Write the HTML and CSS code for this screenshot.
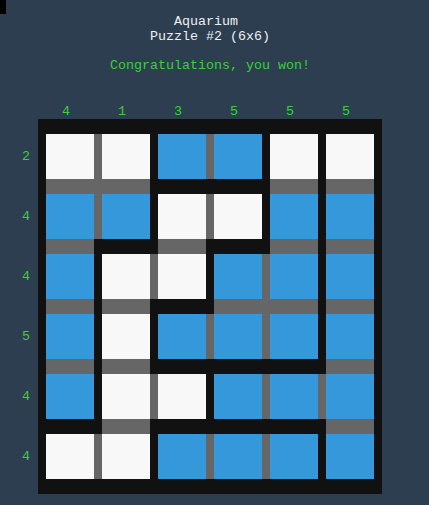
FILE: index.html
```html
<!DOCTYPE html>
<html lang="en">
<head>
<meta charset="utf-8">
<title>Aquarium</title>
<link rel="stylesheet" href="styles.css">
</head>
<body>
<div class="cursor"></div>
<main class="game">
  <header class="head">
    <h1 class="title"><span class="name">Aquarium</span><span class="sub">Puzzle #2 (6x6)</span></h1>
    <p class="status">Congratulations, you won!</p>
  </header>
  <div class="col-labels"><span>4</span><span>1</span><span>3</span><span>5</span><span>5</span><span>5</span></div>
  <div class="row-labels"><span>2</span><span>4</span><span>4</span><span>5</span><span>4</span><span>4</span></div>
  <div class="board">
    <div class="w"></div><div class="g"></div><div class="w"></div><div></div><div class="b"></div><div class="g"></div><div class="b"></div><div></div><div class="w"></div><div></div><div class="w"></div>
    <div class="g"></div><div class="g"></div><div class="g"></div><div></div><div></div><div></div><div></div><div></div><div class="g"></div><div></div><div class="g"></div>
    <div class="b"></div><div class="g"></div><div class="b"></div><div></div><div class="w"></div><div class="g"></div><div class="w"></div><div></div><div class="b"></div><div></div><div class="b"></div>
    <div class="g"></div><div></div><div></div><div></div><div class="g"></div><div></div><div></div><div></div><div class="g"></div><div></div><div class="g"></div>
    <div class="b"></div><div></div><div class="w"></div><div class="g"></div><div class="w"></div><div></div><div class="b"></div><div class="g"></div><div class="b"></div><div></div><div class="b"></div>
    <div class="g"></div><div></div><div class="g"></div><div></div><div></div><div></div><div class="g"></div><div class="g"></div><div class="g"></div><div></div><div class="g"></div>
    <div class="b"></div><div></div><div class="w"></div><div></div><div class="b"></div><div class="g"></div><div class="b"></div><div class="g"></div><div class="b"></div><div></div><div class="b"></div>
    <div class="g"></div><div></div><div class="g"></div><div></div><div></div><div></div><div></div><div></div><div></div><div></div><div class="g"></div>
    <div class="b"></div><div></div><div class="w"></div><div class="g"></div><div class="w"></div><div></div><div class="b"></div><div class="g"></div><div class="b"></div><div class="g"></div><div class="b"></div>
    <div></div><div></div><div class="g"></div><div></div><div></div><div></div><div></div><div></div><div></div><div></div><div class="g"></div>
    <div class="w"></div><div class="g"></div><div class="w"></div><div></div><div class="b"></div><div class="g"></div><div class="b"></div><div class="g"></div><div class="b"></div><div></div><div class="b"></div>
  </div>
</main>
</body>
</html>
```
FILE: styles.css
```css
html, body {
  margin: 0;
  padding: 0;
  background: #2c3e50;
}
body {
  font-family: "Courier New", Courier, "Nimbus Mono PS", "FreeMono", "Liberation Mono", monospace;
  font-size: 13.333px;
  line-height: 15px;
  color: #ecf0f1;
}
.cursor {
  width: 6px;
  height: 14px;
  background: #000;
}
.game {
  display: grid;
  grid-template-columns: 24px 344px;
  margin-left: 14px;
}
.head {
  grid-column: 2;
  text-align: center;
}
.title {
  margin: 0;
  font-size: inherit;
  font-weight: normal;
  line-height: 15px;
}
.title span {
  display: block;
}
.name {
  padding-right: 8px;
}
.status {
  margin: 14px 0 31px;
  color: #3ccf3c;
}
.col-labels {
  grid-column: 2;
  display: flex;
  color: #3ccf3c;
}
.col-labels span {
  width: 56px;
  text-align: center;
}
.row-labels {
  grid-column: 1;
  display: grid;
  grid-template-rows: repeat(6, 45px);
  row-gap: 15px;
  padding-top: 15px;
  align-items: center;
  justify-items: center;
  color: #3ccf3c;
}
.board {
  grid-column: 2;
  display: grid;
  grid-template-columns: 48px repeat(5, 8px 48px);
  grid-template-rows: 45px repeat(5, 15px 45px);
  padding: 15px 8px;
  background: #111;
}
.w { background: #f8f8f8; }
.b { background: #3498db; }
.g { background: #666; }
```
